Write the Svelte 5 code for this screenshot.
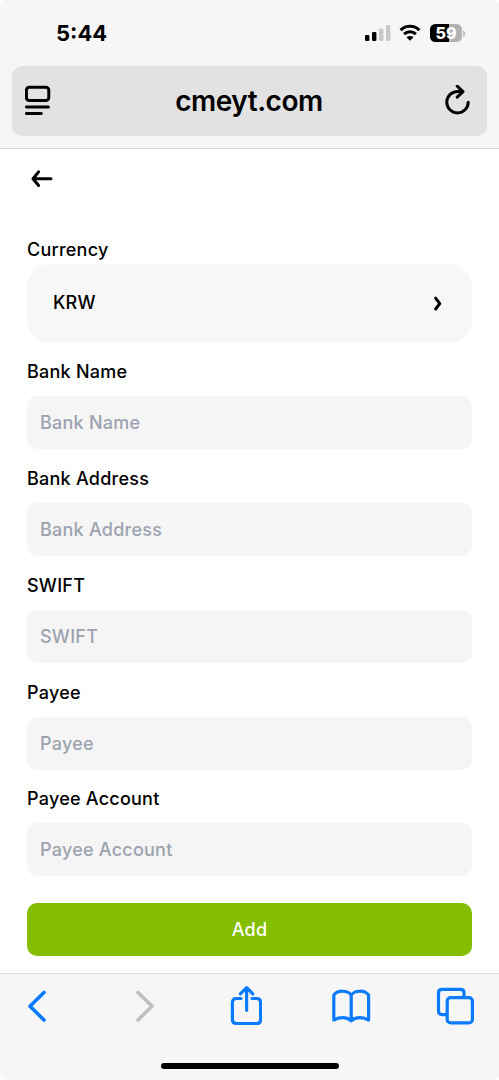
<script lang="ts">
  const fields = ["Bank Name", "Bank Address", "SWIFT", "Payee", "Payee Account"];
  const battery = 59;
</script>

<div class="phone">
  <header>
    <div class="status">
      <span class="time">5:44</span>
      <div class="indicators">
        <svg width="26" height="18" viewBox="0 0 26 18">
          <rect x="0" y="11" width="4.4" height="6" rx="1.3" />
          <rect x="7" y="8" width="4.4" height="9" rx="1.3" />
          <rect class="off" x="14" y="4.5" width="4.4" height="12.5" rx="1.3" />
          <rect class="off" x="21" y="1" width="4.4" height="16" rx="1.3" />
        </svg>
        <svg class="wifi" width="22" height="18" viewBox="0 0 22 18">
          <path d="M1.6 6.1C6.8 .9 15.2 .9 20.4 6.1" />
          <path d="M5.1 10.1C8.4 7 13.6 7 16.9 10.1" />
          <path class="dot" d="M7.5 13.2Q11 10.6 14.5 13.2L11 16.8Z" />
        </svg>
        <div class="battery">
          <div class="charge" style="width: {battery}%"></div>
          <span>{battery}</span>
        </div>
        <svg class="cap" width="3" height="7" viewBox="0 0 3 8"><path d="M0 0Q4.4 4 0 8Z" /></svg>
      </div>
    </div>
    <div class="address">
      <svg class="line" width="26" height="32" viewBox="0 0 26 32">
        <rect x="1.4" y="2.3" width="22.4" height="13.2" rx="3" />
        <path d="M1.4 21.9H23.4M1.4 28.6H16.3" />
      </svg>
      <span class="url">cmeyt.com</span>
      <svg class="line reload" width="26" height="32" viewBox="0 0 26 32">
        <path d="M23.2 17.2A10.7 10.7 0 1 1 12.5 6.5H17.2M12.2 1.1L18 6.6L12.2 12.1" />
      </svg>
    </div>
  </header>

  <main>
    <button class="back" aria-label="Back">
      <svg class="line" width="24" height="20" viewBox="0 0 24 20">
        <path d="M21 9.7H3M8.6 2.9L3 9.7L8.6 16.5" />
      </svg>
    </button>
    <div class="label currency">Currency</div>
    <button class="select">
      <span>KRW</span>
      <svg class="line" width="10" height="18" viewBox="0 0 10 18">
        <path d="M3.6 3.2L7.8 8.6L3.6 14" />
      </svg>
    </button>

    {#each fields as field}
      <label class="field">
        <span class="label">{field}</span>
        <input type="text" placeholder={field} />
      </label>
    {/each}

    <button class="add">Add</button>
  </main>

  <footer>
    <nav>
      <div class="slot"><svg width="20" height="40" viewBox="0 0 20 40"><path d="M17 6.5L3 20.2L17 34" /></svg></div>
      <div class="slot"><svg class="disabled" width="27" height="40" viewBox="-7 0 27 40"><path d="M3 6.5L17 20.2L3 34" /></svg></div>
      <div class="slot">
        <svg class="thin" width="32" height="40" viewBox="0 0 32 40">
          <path d="M11 12.5H6.4Q2.4 12.5 2.4 16.5V33.5Q2.4 37.5 6.4 37.5H26.6Q30.6 37.5 30.6 33.5V16.5Q30.6 12.5 26.6 12.5H22" />
          <path d="M16.6 24.3V1.9M10.4 7.8L16.6 1.7L22.8 7.8" />
        </svg>
      </div>
      <div class="slot">
        <svg class="thin" width="40" height="40" viewBox="0 0 40 40">
          <path d="M20.2 9.2C17 4.2 6.5 3.6 2.8 9.2V34C8.5 30.7 16 30.7 20.2 34.8C24.4 30.7 32 30.7 37.6 34V9.2C34 3.6 23.5 4.2 20.2 9.2ZM20.2 9.2V34.8" />
        </svg>
      </div>
      <div class="slot">
        <svg class="thin" width="38" height="40" viewBox="0 0 38 40">
          <path d="M10.5 28.6H6Q2.5 28.6 2.5 25.1V6.9Q2.5 3.4 6 3.4H24.5Q28 3.4 28 6.9V11" />
          <rect x="11.2" y="11.7" width="25.2" height="25.2" rx="3.5" />
        </svg>
      </div>
    </nav>
    <div class="home"></div>
  </footer>
</div>

<style>
  :global(body) {
    margin: 0;
    background: #fff;
  }
  .phone {
    width: 499px;
    height: 1080px;
    display: flex;
    flex-direction: column;
    overflow: hidden;
    background: #fff;
    color: #000;
    font-family: Inter, "Liberation Sans", sans-serif;
    font-size: 18px;
    font-weight: 500;
    letter-spacing: 0.24px;
  }
  header, main, footer, input, button {
    box-sizing: border-box;
  }
  button, input {
    font: inherit;
    letter-spacing: inherit;
    color: inherit;
    border: 0;
    margin: 0;
  }
  svg {
    display: block;
    flex: none;
  }
  .line {
    fill: none;
    stroke: #000;
    stroke-width: 3;
    stroke-linecap: round;
    stroke-linejoin: round;
  }

  header {
    height: 149px;
    padding: 0 12px;
    background: #f6f6f6;
    border-bottom: 1px solid #d4d4d4;
    border-radius: 5px 5px 0 0;
  }
  .status {
    height: 66px;
    padding: 0 21px 0 44px;
    display: flex;
    align-items: center;
    justify-content: space-between;
  }
  .time {
    font-size: 22px;
    font-weight: 700;
    letter-spacing: 0;
  }
  .indicators {
    display: flex;
    align-items: center;
  }
  .off {
    fill: #c8c8c8;
  }
  .wifi {
    margin: 0 9px 0 8px;
    fill: none;
    stroke: #000;
    stroke-width: 3;
  }
  .wifi .dot {
    fill: #000;
    stroke: none;
  }
  .battery {
    width: 32px;
    height: 18px;
    border-radius: 5.5px;
    overflow: hidden;
    background: #b2b2b2;
    display: grid;
  }
  .battery > * {
    grid-area: 1 / 1;
  }
  .charge {
    background: #000;
  }
  .battery span {
    color: #fff;
    font-size: 16px;
    font-weight: 800;
    line-height: 18px;
    letter-spacing: 0;
    text-align: center;
  }
  .cap {
    margin-left: 1px;
    fill: #b2b2b2;
  }
  .address {
    height: 70px;
    padding: 0 16px 0 13px;
    border-radius: 10px;
    background: #e2e2e2;
    display: flex;
    align-items: center;
    justify-content: space-between;
  }
  .url {
    font-size: 28px;
    font-weight: 600;
    letter-spacing: -0.5px;
    padding-left: 2px;
  }

  main {
    flex: 1;
    padding: 20px 27px 0;
  }
  .back {
    display: block;
    padding: 0 0 0 3px;
    background: none;
  }
  .label {
    display: block;
    line-height: 22px;
  }
  .currency {
    margin-top: 50px;
  }
  .select {
    width: 100%;
    height: 79px;
    margin: 3px 0 18.3px;
    padding: 0 30px 2px 26px;
    border-radius: 22px;
    background: #f7f7f7;
    display: flex;
    align-items: center;
    justify-content: space-between;
  }
  .select .line {
    margin-top: 2px;
  }
  .field {
    display: block;
    height: 106.8px;
  }
  input {
    display: block;
    width: 100%;
    height: 53px;
    margin-top: 13px;
    padding: 0 13px;
    border-radius: 10px;
    background: #f5f5f5;
  }
  input::placeholder {
    color: #9ca3af;
    opacity: 1;
  }
  .add {
    display: block;
    width: 100%;
    height: 53px;
    margin-top: 7.7px;
    border-radius: 10px;
    background: #85be00;
    color: #fff;
  }

  footer {
    height: 107px;
    padding: 12px 18px 0 11px;
    background: #f6f6f6;
    border-top: 1px solid #d9d9d9;
    border-radius: 0 0 5px 5px;
  }
  nav {
    display: flex;
    justify-content: space-between;
    fill: none;
    stroke: #0a7aff;
    stroke-width: 3.6;
    stroke-linecap: round;
    stroke-linejoin: round;
  }
  .slot {
    width: 52px;
    display: flex;
    justify-content: center;
  }
  .disabled {
    stroke: #bfbfbf;
  }
  .thin {
    stroke-width: 3.2;
  }
  .home {
    width: 178px;
    height: 6px;
    margin: 37px 0 0 150px;
    border-radius: 3px;
    background: #000;
  }
</style>
